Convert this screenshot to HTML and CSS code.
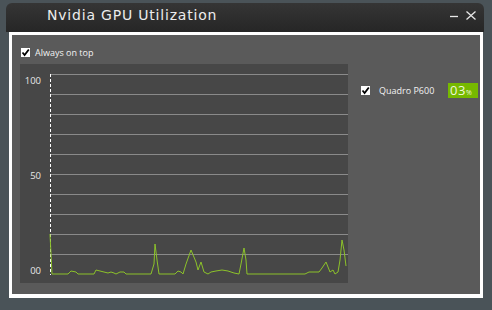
FILE: index.html
```html
<!DOCTYPE html>
<html lang="en">
<head>
    <meta charset="UTF-8">
    <meta name="viewport" content="width=device-width, initial-scale=1.0">
    <title>Nvidia GPU Utilization</title>
    <link rel="stylesheet" href="styles.css">
</head>
<body>
    <div class="window">
        <div class="titlebar">
            <span class="title">Nvidia GPU Utilization</span>
            <span class="controls">
                <svg class="min" width="8" height="9" viewBox="0 0 8 9"><line x1="0" y1="5.5" x2="8" y2="5.5" stroke="#e8e8e8" stroke-width="1.3"/></svg>
                <svg class="close" width="10" height="9" viewBox="0 0 10 9"><path d="M0.5 0.5 L9.5 8.5 M9.5 0.5 L0.5 8.5" stroke="#e8e8e8" stroke-width="1.3"/></svg>
            </span>
        </div>

        <div class="frame">
            <div class="inner">
                <label class="check-row">
                    <span class="box"><svg width="9" height="9" viewBox="0 0 9 9"><path d="M1.5 4.5 L3.6 7 L7.8 1.5" fill="none" stroke="#000" stroke-width="1.8"/></svg></span>
                    Always on top
                </label>

                <div class="main">
                    <div class="chart">
                        <svg width="328" height="219" viewBox="0 0 328 219">
                            <g stroke="#8a8a8a" stroke-width="1">
                                <line x1="30" y1="10.5" x2="328" y2="10.5"/>
                                <line x1="30" y1="30.5" x2="328" y2="30.5"/>
                                <line x1="30" y1="50.5" x2="328" y2="50.5"/>
                                <line x1="30" y1="70.5" x2="328" y2="70.5"/>
                                <line x1="30" y1="90.5" x2="328" y2="90.5"/>
                                <line x1="30" y1="110.5" x2="328" y2="110.5"/>
                                <line x1="30" y1="130.5" x2="328" y2="130.5"/>
                                <line x1="30" y1="150.5" x2="328" y2="150.5"/>
                                <line x1="30" y1="170.5" x2="328" y2="170.5"/>
                                <line x1="30" y1="190.5" x2="328" y2="190.5"/>
                            </g>
                            <line x1="30.5" y1="10" x2="30.5" y2="211" stroke="#fff" stroke-width="1" stroke-dasharray="3 2"/>
                            <polyline fill="none" stroke="#8cc22a" stroke-width="1"
                                points="30,170 32,210 48,210 51,207 56,208 58,210 74,210 76,206 80,207 84,208 88,209 91,208 94,209 96,210 100,208 104,208 106,210 131,210 134,200 135,180 137,196 139,210 155,210 158,207 161,208 163,210 166,200 171,186 176,198 178,206 181,198 184,208 188,210 191,208 196,207 202,206 208,207 214,209 219,210 221,200 224,184 226,196 227,210 285,210 289,208 299,208 302,204 306,198 310,208 313,206 315,210 318,208 320,196 322,176 324,186 326,202"/>
                            <text class="axis" x="21" y="20" text-anchor="end">100</text>
                            <text class="axis" x="21" y="115" text-anchor="end">50</text>
                            <text class="axis" x="21" y="210" text-anchor="end">00</text>
                        </svg>
                    </div>

                    <div class="side">
                        <label class="check-row gpu">
                            <span class="box"><svg width="9" height="9" viewBox="0 0 9 9"><path d="M1.5 4.5 L3.6 7 L7.8 1.5" fill="none" stroke="#000" stroke-width="1.8"/></svg></span>
                            Quadro P600
                        </label>
                        <span class="badge">03<small>%</small></span>
                    </div>
                </div>
            </div>
        </div>
    </div>
</body>
</html>
```

FILE: styles.css
```css
body {
    margin: 0;
    background-color: #4a5358;
    font-family: "Open Sans", "Noto Sans", sans-serif;
}

.window {
    margin: 3px 0 0 6px;
    width: 478px;
}

.titlebar {
    height: 29px;
    box-sizing: border-box;
    padding-bottom: 6px;
    display: flex;
    align-items: center;
    justify-content: space-between;
    background: linear-gradient(#353535, #262626);
    border-radius: 6px 6px 0 0;
    color: #ececec;
}

.title {
    margin-left: 41px;
    font-family: "DejaVu Sans", sans-serif;
    font-size: 14px;
    letter-spacing: 0.8px;
}

.controls {
    display: flex;
    align-items: center;
    margin-right: 8px;
    padding-top: 2px;
}

.min {
    margin-right: 8px;
}

.frame {
    margin: 0 1px 0 3px;
    border: 3px solid #fff;
    border-bottom-width: 4px;
}

.inner {
    background-color: #5a5a5a;
    height: 259px;
    padding: 0 0 0 8px;
}

.check-row {
    display: flex;
    align-items: center;
    font-size: 9px;
    color: #f2f2f2;
    white-space: nowrap;
}

.inner > .check-row {
    height: 29px;
    padding-left: 1px;
    padding-top: 5px;
    box-sizing: border-box;
}

.box {
    width: 9px;
    height: 9px;
    background-color: #fff;
    margin-right: 5px;
    display: flex;
    flex-shrink: 0;
}

.main {
    display: flex;
}

.chart {
    width: 328px;
    height: 219px;
    flex-shrink: 0;
    background-color: #474747;
}

.chart svg {
    display: block;
}

.axis {
    font-family: "Open Sans", sans-serif;
    font-size: 9.5px;
    fill: #e6e6e6;
}

.side {
    flex: 1;
    display: flex;
    align-items: center;
    margin-top: 19px;
    padding-right: 2px;
    height: 15px;
}

.gpu {
    margin-left: 13px;
}

.gpu .box {
    margin-right: 9px;
}

.badge {
    margin-left: auto;
    width: 30px;
    height: 15px;
    background-color: #76b900;
    color: #eef7dc;
    font-size: 13px;
    line-height: 15px;
    padding-left: 2px;
    box-sizing: border-box;
    letter-spacing: 0.5px;
    white-space: nowrap;
}

.badge small {
    font-size: 7px;
}
```
